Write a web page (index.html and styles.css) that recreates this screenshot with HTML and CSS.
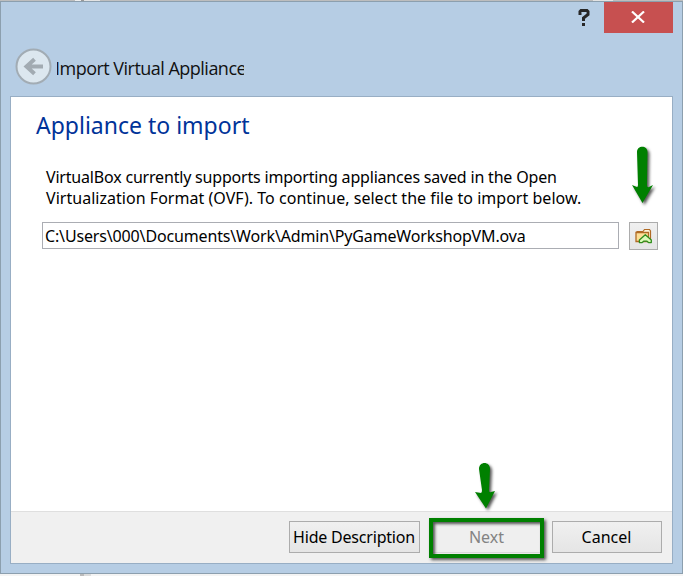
FILE: index.html
```html
<!DOCTYPE html>
<html lang="en">
<head>
<meta charset="utf-8">
<title>Import Virtual Appliance</title>
<link rel="stylesheet" href="styles.css">
</head>
<body>
<div class="desktop">
  <main class="window">
    <div class="titlebar">
      <svg class="help" width="12" height="17" viewBox="0 0 12 17" aria-label="Help"><path d="M2 6V2.5L3 1.5h6l1 1v3L5.500 9v3" fill="none" stroke="#272727" stroke-width="3"/><path d="M4 14h3v3H4z" fill="#272727"/></svg>
      <button class="close" aria-label="Close"><svg width="14" height="12" viewBox="0 0 14 12"><path d="M1 .5 13 11.5M13 .5 1 11.5" stroke="#fff" stroke-width="2.2"/></svg></button>
    </div>
    <header class="wizard-header">
      <svg class="back" width="37" height="37" viewBox="0 0 37 37" aria-label="Back"><circle cx="18.5" cy="18.5" r="17" fill="#dce7ef" stroke="#a2acb4" stroke-width="2"/><path d="M28 18.5H12M19.5 11.3 11.5 18.5 19.5 25.7" fill="none" stroke="#a2abb2" stroke-width="4"/></svg>
      <span class="wizard-title">Import Virtual Appliance</span>
    </header>
    <section class="client">
      <div class="content">
        <h1>Appliance to import</h1>
        <p><span class="line1">VirtualBox currently supports importing appliances saved in the Open</span><br><span class="line2">Virtualization Format (OVF). To continue, select the file to import below.</span></p>
        <div class="file-row">
          <div class="path"><span>C:\Users\000\Documents\Work\Admin\PyGameWorkshopVM.ova</span></div>
          <button class="browse" aria-label="Choose file">
            <svg width="17" height="16" viewBox="0 0 17 16"><path d="M2 13V3.5h6l1.500-2H14.500l1 1.500v10z" fill="#fff6da" stroke="#b06a25" stroke-width="1.2"/><path d="M1 4.500h12.500V13.500H1z" fill="#fddf97" stroke="#b06a25" stroke-width="1.3"/><path d="M10.300 6.800 16.300 12v2.600h-2.800l-1.800-1.500H9l-1.800 1.500H4.400V12z" fill="#dcfbb8" stroke="#2f8d1c" stroke-width="1.3" stroke-linejoin="round"/></svg>
          </button>
        </div>
      </div>
      <footer>
        <button class="btn hide"><span>Hide Description</span></button>
        <button class="btn next" disabled><span>Next</span></button>
        <button class="btn cancel"><span>Cancel</span></button>
      </footer>
    </section>
  </main>
  <svg class="arrow arrow-browse" width="32" height="66" viewBox="0 0 32 66"><path d="M6 7c0-7 10.500-7 10.500 0l-.5 33q0 3 2 2l4-2-10.500 18L1 40l5 2q1 0 1-2z" fill="#008000"/></svg>
  <svg class="arrow arrow-next" width="32" height="56" viewBox="0 0 32 56"><path d="M4 7c0-8 11-8 11 0l-1 21q0 3 2 2l4-1-9 17.500L0 30l6 1q1 0 1-3z" fill="#008000"/></svg>
  <div class="highlight"></div>
</div>
</body>
</html>
```

FILE: styles.css
```css
* { box-sizing: border-box; }
body { margin: 0; font: 16px/21px "Noto Sans", sans-serif; color: #000; }
button { margin: 0; padding: 0; font: inherit; color: inherit; border-radius: 0; }
.desktop { position: relative; width: 683px; height: 576px; padding-top: 1px; overflow: hidden;
  background: linear-gradient(90deg, #bdbdbd 75px, #eee 75px 81px, #999 81px 84px, #e3e3e3 84px 100px, #bdbdbd 100px 593px, #e3e3e3 593px 613px, #bdbdbd 613px) top / 100% 1px no-repeat,
  linear-gradient(90deg, transparent 80px, #bbb 80px 84px, #ddd 84px 91px, transparent 91px) bottom / 100% 2px no-repeat, #f4f4f4; }
.window { height: 573px; border: 1px solid #8c9fae; background: #b6cde4; display: flex; flex-direction: column; }
.titlebar { height: 31px; display: flex; justify-content: flex-end; margin-right: 9px; }
.help { margin: 7px 14px 0 0; }
.close { width: 69px; height: 31px; border: 0; background: #c75050; display: flex; align-items: center; justify-content: center; }
.close svg { margin: 0 2px 1px 0; }
.wizard-header { height: 63px; display: flex; align-items: center; padding: 4px 0 0 14px; }
.back { flex: none; }
.wizard-title { width: 187px; margin: 3px 0 0 5px; overflow: hidden; white-space: nowrap; font: 18px/26px "Open Sans", sans-serif; letter-spacing: -.52px; text-indent: -2px; color: #111; }
.client { width: 663px; height: 468px; margin-left: 9px; border: 1px solid #98aec4; background: #fff; display: flex; flex-direction: column; }
.content { flex: 1; padding: 12px 14px 0 31px; }
h1 { margin: 0 0 26px -6px; font: 23px/32px "Noto Sans", sans-serif; color: #003399; white-space: nowrap; }
p { margin: 0 0 13px 4px; white-space: nowrap; }
.line1 { letter-spacing: -.19px; }
.line2 { letter-spacing: .03px; }
.file-row { display: flex; gap: 10px; align-items: flex-start; }
.path { width: 577px; height: 27px; border: 1px solid #abadb3; padding: 3px 2px; white-space: nowrap; letter-spacing: -.15px; }
.browse { width: 29px; height: 28px; border: 1px solid #acacac; background: linear-gradient(#f0f0f0, #e5e5e5); display: grid; place-items: center; }
footer { height: 52px; border-top: 1px solid #dfdfdf; background: #f0f0f0; display: flex; padding: 9px 10px 0 0; justify-content: flex-end; }
.btn { height: 32px; border: 1px solid #acacac; background: linear-gradient(#f0f0f0, #e5e5e5); white-space: nowrap; }
.btn span { margin-right: 1px; }
.hide { width: 131px; margin-right: 12px; letter-spacing: -.2px; }
.next { width: 110px; margin-right: 10px; background: #efefef; border-color: #d9d9d9; color: #838383; }
.cancel { width: 110px; }
.highlight { position: absolute; left: 429px; top: 518px; width: 115px; height: 40px; border: 4px solid #008000; box-shadow: 2px 2px 3px #555, inset 2px 2px 3px #555; }
.arrow { position: absolute; filter: drop-shadow(2px 2px 1.5px #555); }
.arrow-browse { left: 631px; top: 145px; }
.arrow-next { left: 475px; top: 462px; }
```
